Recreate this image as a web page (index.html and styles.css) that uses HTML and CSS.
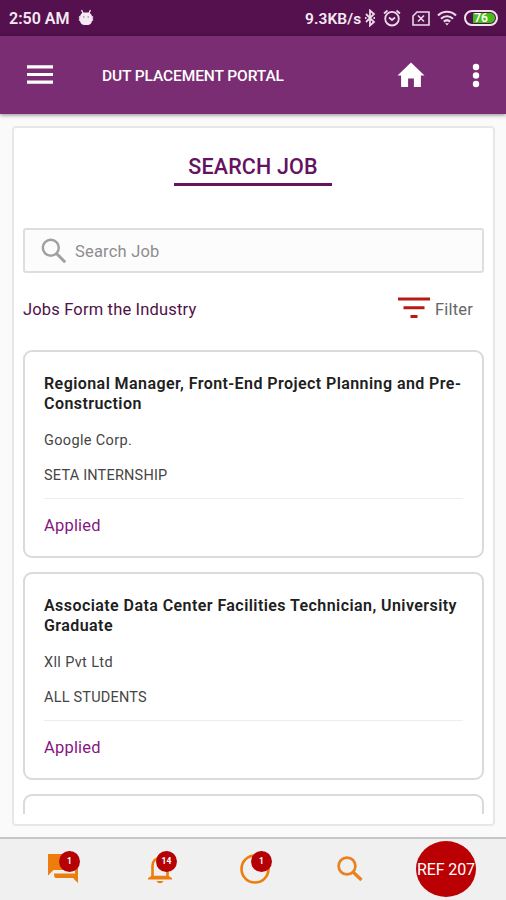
FILE: index.html
```html
<!DOCTYPE html>
<html lang="en">
<head>
<meta charset="utf-8">
<title>DUT Placement Portal</title>
<link rel="stylesheet" href="styles.css">
</head>
<body>
<div class="app">
  <div class="status">
    <span class="clock">2:50 AM</span>
    <svg class="bug" width="16" height="18" viewBox="0 0 16 18"><path d="M3.500 1l2 4M12.500 1l-2 4" stroke="#f5eaf4" stroke-width="1.300"/><rect x="2" y="3.500" width="12" height="12.500" rx="4.500" fill="#f5eaf4"/><path d="M1.500 7v5M14.500 7v5" stroke="#d9bfd6" stroke-width="1.200"/><circle cx="5.800" cy="8" r=".7" fill="#8b5c86"/><circle cx="10.200" cy="8" r=".7" fill="#8b5c86"/></svg>
    <span class="speed">9.3KB/s</span>
    <svg class="bt" width="12" height="18" viewBox="0 0 12 18"><path d="M2 5l8 8-4 3.500v-15L10 5l-8 8M1 9h1.500M9.500 9H11" fill="none" stroke="#ead9e8" stroke-width="1.800"/></svg>
    <svg class="alarm" width="18" height="18" viewBox="0 0 18 18"><g fill="none" stroke="#ead9e8" stroke-width="1.800"><circle cx="9" cy="9.700" r="6.800"/><path d="M1 4.500L4.500 1.500M17 4.500L13.500 1.500M6 8.500l3 2.500 3-2.500"/></g></svg>
    <svg class="sim" width="18" height="15" viewBox="0 0 18 15"><g fill="none" stroke="#ead9e8" stroke-width="1.600"><path d="M5 1h12v13H1V5z"/><path d="M6 4.500l6 6M12 4.500l-6 6"/></g></svg>
    <svg class="wifi" width="20" height="16" viewBox="0 0 20 16"><g fill="none" stroke="#ead9e8" stroke-width="2.200"><path d="M1 5.500c5-5 13-5 18 0M4 8.700c3.500-3.300 8.500-3.300 12 0M6.800 11.600c2-1.700 4.400-1.700 6.400 0"/></g><path d="M8 13.300h4L10 15.500z" fill="#ead9e8"/></svg>
    <div class="battery"><span>76</span></div>
  </div>
  <header class="bar">
    <svg class="menu" width="28" height="22" viewBox="0 0 28 22"><path d="M1 2.800h26M1 10.500h26M1 18.200h26" stroke="#fff" stroke-width="3.200"/></svg>
    <h1>DUT PLACEMENT PORTAL</h1>
    <svg class="home" width="28" height="26" viewBox="0 0 28 26"><path d="M14 .5L.5 13.500h3.600V25h7v-8.500h5.800V25h7V13.500h3.600z" fill="#fff"/></svg>
    <svg class="dots" width="8" height="26" viewBox="0 0 8 26"><g fill="#fff"><circle cx="4" cy="4" r="3.200"/><circle cx="4" cy="12.500" r="3.200"/><circle cx="4" cy="21" r="3.200"/></g></svg>
  </header>
  <main>
    <section class="panel">
      <h2>SEARCH JOB</h2>
      <div class="search">
        <svg width="26" height="26" viewBox="0 0 26 26"><g fill="none" stroke="#a0a0a0"><circle cx="9.800" cy="9.800" r="8" stroke-width="2.400"/><path d="M15.700 15.700l8.500 8.500" stroke-width="3"/></g></svg>
        <span>Search Job</span>
      </div>
      <div class="tools">
        <span class="source">Jobs Form the Industry</span>
        <svg width="32" height="22" viewBox="0 0 32 22"><path d="M0 2h32M5.500 10.700h21M12.500 19.400h7" stroke="#b51a14" stroke-width="3"/></svg>
        <span class="filter">Filter</span>
      </div>
      <div class="list">
        <article class="job">
          <h3>Regional Manager, Front-End Project Planning and Pre-<br>Construction</h3>
          <p class="company">Google Corp.</p>
          <p class="kind">SETA INTERNSHIP</p>
          <p class="state">Applied</p>
        </article>
        <article class="job">
          <h3>Associate Data Center Facilities Technician, University<br>Graduate</h3>
          <p class="company">Xll Pvt Ltd</p>
          <p class="kind">ALL STUDENTS</p>
          <p class="state">Applied</p>
        </article>
        <article class="job"></article>
      </div>
    </section>
  </main>
  <nav>
    <div class="item chat">
      <svg width="30" height="30" viewBox="0 0 30 30"><path d="M0 0h25v16H5.500L0 21.500zM27 6h3v23l-5-5H8q-2 0-2-4.500h21z" fill="#ed7d0c"/></svg>
      <b>1</b>
    </div>
    <div class="item bell">
      <svg width="24" height="30" viewBox="0 0 24 30"><path d="M4.500 24V12c0-5 3-8 7.500-8s7.500 3 7.500 8v12" fill="none" stroke="#ed7d0c" stroke-width="2.600"/><path d="M0 25.500v-1.300l3.500-2.500h17l3.500 2.500v1.300zM8.500 27h7q-1 2.300-3.500 2.300T8.500 27zM10 4V2.500a2 2 0 014 0V4z" fill="#ed7d0c"/></svg>
      <b>14</b>
    </div>
    <div class="item clock-item">
      <svg width="30" height="30" viewBox="0 0 30 30"><circle cx="15" cy="15" r="13.500" fill="none" stroke="#ed7d0c" stroke-width="2.600"/></svg>
      <b>1</b>
    </div>
    <svg class="find" width="26" height="26" viewBox="0 0 26 26"><g fill="none" stroke="#e9821f"><circle cx="10" cy="10" r="8.400" stroke-width="2.700"/><path d="M16 16l8.500 8" stroke-width="3.300"/></g></svg>
    <div class="ref">REF 207</div>
  </nav>
</div>
</body>
</html>
```
FILE: styles.css
```css
* { box-sizing: border-box; }
body { margin: 0; font-family: Roboto, "Liberation Sans", sans-serif; background: #fafafa; }
h1, h2, h3, p { margin: 0; }
svg { display: block; flex: none; }
.app { width: 506px; height: 900px; display: flex; flex-direction: column; overflow: hidden; white-space: nowrap; }

.status { height: 36px; flex: none; background: #55104e; display: flex; align-items: center; padding-left: 9px; color: #f5eaf4; font-size: 16px; font-weight: 600; }
.clock { width: 61px; padding-top: 1px; }
.bug { margin-left: 8px; }
.speed { margin-left: 211px; width: 57px; padding-top: 2px; font-size: 15.500px; letter-spacing: .1px; }
.bt { margin-left: 2px; }
.alarm { margin-left: 7px; }
.sim { margin-left: 11px; }
.wifi { margin-left: 7px; }
.battery { margin-left: 7px; width: 34px; height: 16px; border: 2px solid #f0e4ef; border-radius: 8px; padding: 1px; }
.battery span { display: block; height: 10px; border-radius: 5px; background: linear-gradient(90deg, #55104e 22%, #45bd17 22%); color: #fff; font-size: 12px; line-height: 11px; text-align: center; }

.bar { height: 78px; flex: none; background: #7a2d73; display: flex; align-items: center; padding-left: 26px; position: relative; box-shadow: 0 1px 4px rgba(0,0,0,.45); }
.menu { margin-top: -1px; }
.bar h1 { margin-left: 48px; width: 295px; color: #fff; font-size: 15.500px; font-weight: 500; padding-top: 2px; letter-spacing: -.1px; }
.dots { margin-left: 47px; margin-top: 1px; }

main { height: 723px; flex: none; padding: 12px 11px 11px 12px; }
.panel { height: 700px; border: 2px solid #e7e7e7; border-radius: 4px; background: #fff; padding: 0 9px; overflow: hidden; }
.panel h2 { width: 158px; height: 58px; margin: 0 0 0 151px; border-bottom: 3px solid #65125f; color: #65125f; font-size: 21.500px; letter-spacing: .15px; font-weight: 500; line-height: 26px; padding-top: 26px; text-align: center; }
.search { height: 45px; margin-top: 42px; border: 2px solid #dedede; border-radius: 3px; background: #fdfcfd; display: flex; align-items: center; padding-left: 16px; color: #8d8d8d; font-size: 16.500px; letter-spacing: .2px; }
.search span { margin-left: 8px; padding-top: 1px; }
.tools { height: 78px; padding-bottom: 5px; display: flex; align-items: center; font-size: 16.500px; letter-spacing: .17px; }
.source { width: 375px; color: #4f1149; }
.filter { margin-left: 5px; color: #666; }
.tools svg { margin-top: -3px; }

.list { height: 464px; overflow: hidden; margin-top: -1px; }
.job { height: 208px; margin-bottom: 14px; border: 2px solid #dadada; border-radius: 9px; padding: 22px 19px 0; color: #454545; }
.job h3 { font-size: 16px; letter-spacing: .43px; line-height: 20px; font-weight: 600; color: #202020; }
.company { margin-top: 17px; font-size: 14.500px; letter-spacing: .35px; line-height: 20px; }
.kind { margin-top: 15px; padding-bottom: 12px; border-bottom: 1px solid #ededed; font-size: 14.500px; letter-spacing: .2px; line-height: 20px; }
.state { margin-top: 17px; font-size: 16.500px; letter-spacing: .2px; line-height: 20px; color: #851680; }

nav { height: 63px; flex: none; background: #f0f0f0; border-top: 2px solid #c6c6c6; display: flex; padding-left: 48px; }
.item { position: relative; height: 30px; margin-top: 15px; }
.item b { position: absolute; top: -3px; width: 21px; height: 21px; border-radius: 50%; background: #b50004; color: #fff; font-size: 8.500px; line-height: 21px; text-align: center; }
.chat b { left: 11px; }
.bell { margin-left: 70px; }
.bell b { left: 8px; }
.clock-item { margin-left: 68px; }
.clock-item b { left: 11px; }
.find { margin: 17px 0 0 67px; }
.ref { width: 60px; height: 56px; margin: 2px 0 0 53px; border-radius: 50%; background: #bb0004; color: #fff; display: flex; align-items: center; justify-content: center; font-size: 16px; letter-spacing: -.1px; padding-top: 1px; }
```
